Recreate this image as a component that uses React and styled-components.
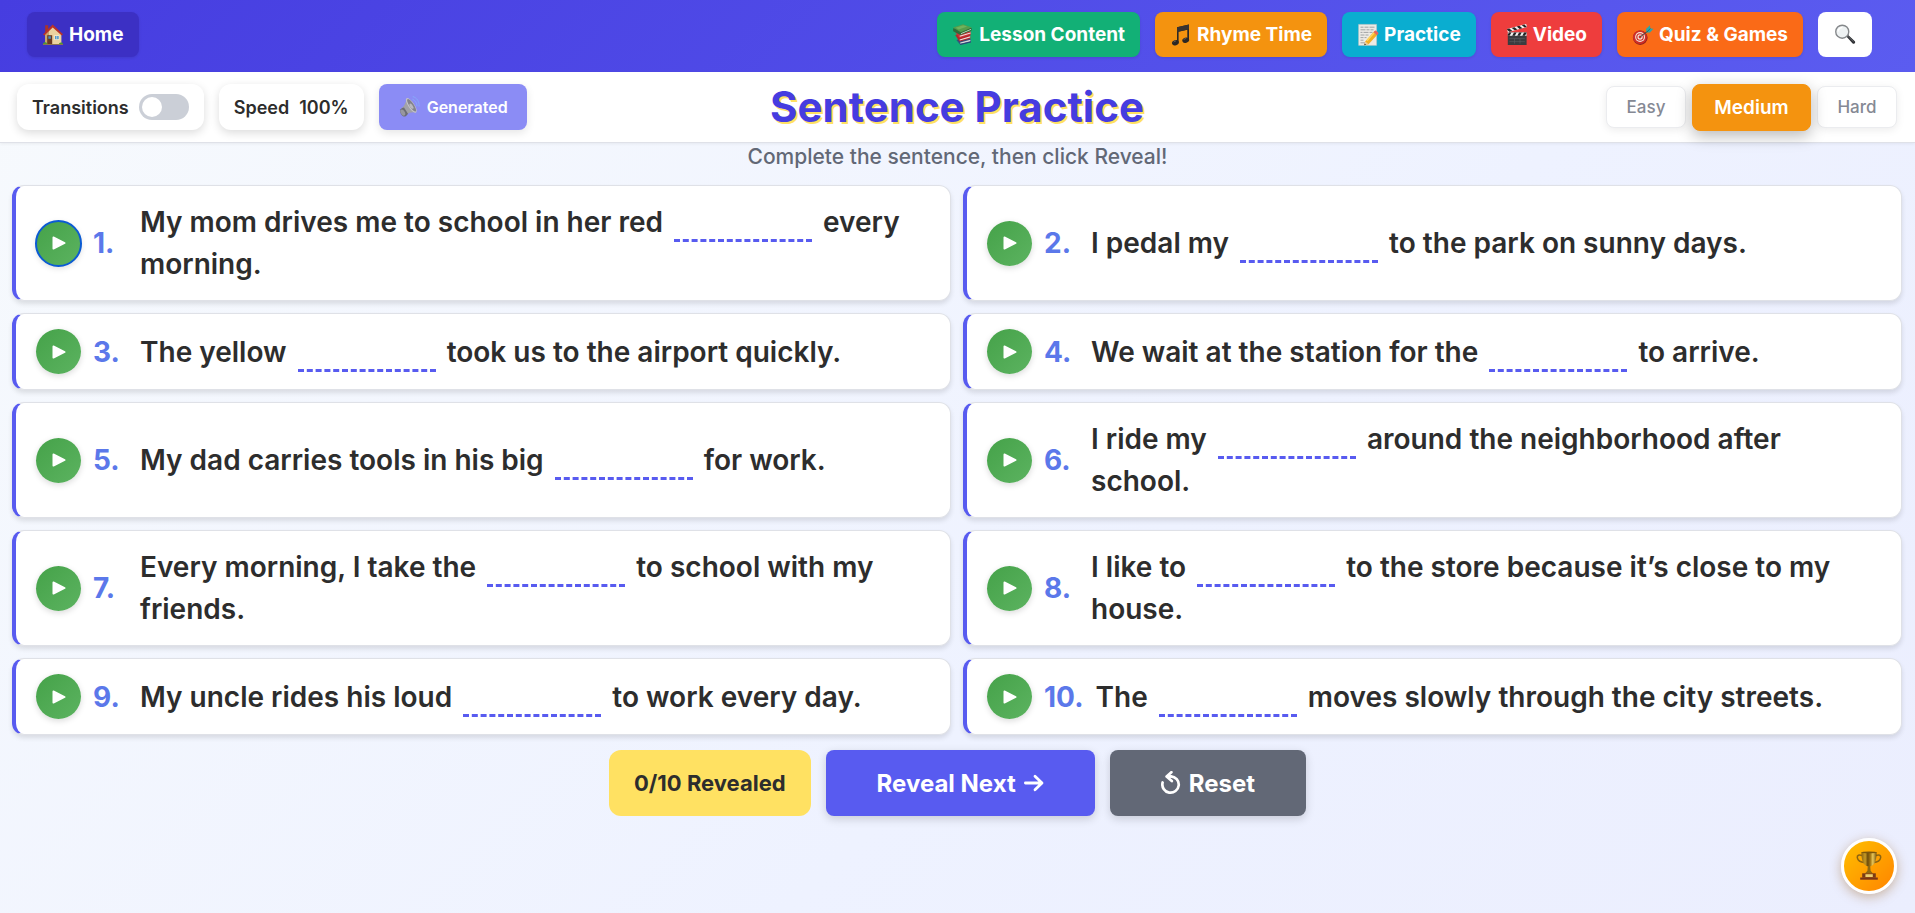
import React, { useState } from 'react';
import styled, { createGlobalStyle, css } from 'styled-components';

const BLANK = '___';

const sentences = [
  `My mom drives me to school in her red ${BLANK} every morning.`,
  `I pedal my ${BLANK} to the park on sunny days.`,
  `The yellow ${BLANK} took us to the airport quickly.`,
  `We wait at the station for the ${BLANK} to arrive.`,
  `My dad carries tools in his big ${BLANK} for work.`,
  `I ride my ${BLANK} around the neighborhood after school.`,
  `Every morning, I take the ${BLANK} to school with my friends.`,
  `I like to ${BLANK} to the store because it’s close to my house.`,
  `My uncle rides his loud ${BLANK} to work every day.`,
  `The ${BLANK} moves slowly through the city streets.`,
];

const levels = ['Easy', 'Medium', 'Hard'];

// Icons

const HouseIcon = () => (
  <Icon viewBox="0 0 22 24">
    <path d="M3.2 2.2h3v5l-3 3z" fill="#a8342a" />
    <path d="M3 10.5 10.8 3l8.6 7.8V21H3z" fill="#ecd3a0" />
    <path d="M3 10.5 7 6.6V21H3z" fill="#c9a56c" />
    <path d="M1 11.4 10.6 1.6 21 11.2l-1.3 1.2L10.7 4.4 2.4 12.6z" fill="#b93228" />
    <path d="M5.2 12.2h5V21h-5z" fill="#6b3a22" />
    <path d="M6.3 13.2h2.6v2.6H6.3z" fill="#4a88b8" />
    <path d="M12.2 12.2h5.2v4.8h-5.2z" fill="#f7ead0" />
    <path d="M13 13h3.7v3.2H13z" fill="#4c9bd0" />
    <path d="M14.7 13v3.2" stroke="#f7ead0" strokeWidth=".6" />
    <path d="M.8 21.7c.2-2.4 2-3 3.4-2.2.7.4 1 1.2 1 2.2zM16.8 21.7c.1-2 1.5-2.6 2.8-2.1 1 .3 1.4 1.2 1.5 2.1z" fill="#4f9a2e" />
    <path d="M1 21h20v1H1z" fill="#8e7250" />
  </Icon>
);

const BooksIcon = () => (
  <Icon viewBox="0 0 22 24">
    <path d="m4.4 17 3.8 4.8 10.6-2.6v-3l-6-2z" fill="#34507f" />
    <path d="m8.2 19.4 10.2-2.6v1.4L8.4 20.8z" fill="#dcdad6" />
    <path d="m8 21 10.8-2.5v.9L8.2 22z" fill="#294777" />
    <path d="m3.2 12 4.2 6.4 11-2.6v-3.4L12 10z" fill="#b5262c" />
    <path d="m7.6 16.4 10.6-3.2v1.2L7.8 17.4z" fill="#e9e5e0" />
    <path d="m2.6 8 4.6 7 11.6-3.2V8.4z" fill="#cb3036" />
    <path d="m7.6 12.8 11-3.4v1L7.8 13.8z" fill="#ece8e2" />
    <path d="m1 5.4.2 2.8 7.4 3.8 11-4.4V4.9L12 4z" fill="#2c6d3a" />
    <path d="m9 10.2 10-4.2v.8L9 11z" fill="#dfe6d6" />
    <path d="M1 4.6 11 1.2l8.8 3.2L8.8 9.2z" fill="#559d4c" />
    <path d="m3.6 4.8 7.6-2.6 4 1.4-8.4 2.8z" fill="#70b25d" />
  </Icon>
);

const MusicIcon = () => (
  <Icon viewBox="0 0 22 24">
    <path d="M7 4.2 19 1.6v15h-1.7V6.8L8.6 8.7v11H7z" fill="#2d2926" />
    <path d="M7 4.2 19 1.6v4.7L7 8.9z" fill="#393330" />
    <ellipse cx="5.4" cy="19.7" rx="3.5" ry="2.6" transform="rotate(-18 5.4 19.7)" fill="#2b2724" />
    <ellipse cx="15.7" cy="17.2" rx="3.5" ry="2.6" transform="rotate(-18 15.7 17.2)" fill="#2b2724" />
    <path d="M3.4 19.3c.6-.9 1.6-1.3 2.5-1.2M13.7 16.8c.6-.9 1.6-1.3 2.5-1.2" stroke="#827a74" strokeWidth=".7" fill="none" />
  </Icon>
);

const MemoIcon = () => (
  <Icon viewBox="0 0 22 24">
    <path d="M1.6 1.4h18v21h-18z" fill="#eceae5" />
    <path d="M1.6 1.4h18v21h-18z" fill="none" stroke="#c2c2be" strokeWidth=".5" />
    <path d="M3.5 4.2h3m1 0h4m1 0h5M3.5 6.8h5m1 0h3m1 0h3M3.5 9.4h2m1 0h5m1 0h3M3.5 12h4m1 0h3M3.5 14.6h3m1 0h2M3.5 17.2h3M3.5 19.8h7" stroke="#8e9294" strokeWidth=".8" />
    <path d="m8.2 18.5 8.7-9.7 3.4 3-8.7 9.5-4.2 1z" fill="#f3ae24" />
    <path d="m9.4 17.3 8.3-9.2 1 .9-8.2 9.2z" fill="#ffd65a" />
    <path d="m16.5 9.2 1-1.1c.6-.7 1.4-.7 2.1-.1l1.3 1.2c.7.6.7 1.3.2 1.9l-1.1 1.1z" fill="#e6665f" />
    <path d="m8.2 18.5-1 3.8 4.4-1z" fill="#edcf9c" />
    <path d="m7.7 20.5-.5 1.8 1.9-.5z" fill="#333" />
  </Icon>
);

const ClapperIcon = () => (
  <Icon viewBox="0 0 22 24">
    <path d="M1.8 9.4h18.8V22H1.8z" fill="#3b3c3f" />
    <path d="M1.8 9.4h18.8v3.4H1.8z" fill="#f2f2f0" />
    <path d="m3 9.4-1.2 2.2v1.2h1.8l1.8-3.4zm5 0-1.8 3.4h2.6l1.8-3.4zm5.1 0-1.8 3.4h2.6l1.8-3.4zm5 0-1.8 3.4h2.7l1.5-2.8v-.6z" fill="#222" />
    <path d="M1 6.1 20.2 1l.8 3.1L1.8 9.2z" fill="#f2f2f0" />
    <path d="m3.4 5.5 3 2.4-3.1.8-2-1.7-.3-.9zm5-1.3 3 2.3-2.7.8-3-2.4zm5-1.4 3 2.4-2.7.7-3-2.4zm5-1.3L21 4.1l-2.2.5-3-2.4z" fill="#242424" />
    <path d="M3.4 15.6h15.4M3.4 18.6h15.4M8.5 15.6v5M14 15.6v5" stroke="#5c5e62" strokeWidth=".6" />
  </Icon>
);

const TargetIcon = () => (
  <Icon viewBox="0 0 24 24">
    <ellipse cx="9" cy="15" rx="8" ry="7.8" fill="#8e1f1c" />
    <ellipse cx="8.6" cy="14.4" rx="7.6" ry="7.4" fill="#cf2f28" />
    <circle cx="8.8" cy="14.2" r="5.4" fill="#f4e7df" />
    <circle cx="8.8" cy="14.2" r="4.2" fill="#cf2f28" />
    <circle cx="8.8" cy="14.2" r="2.9" fill="#f4e7df" />
    <circle cx="8.8" cy="14.2" r="1.6" fill="#cf2f28" />
    <path d="m9 14 9-7" stroke="#524a45" strokeWidth="1.1" />
    <path d="m16 9.2-.8-3.8 4.4-4 .4 3.4 3.4.5-3.8 3.9z" fill="#2fa6a6" />
    <path d="m16 9.2 4-4.4" stroke="#156a74" strokeWidth=".9" />
  </Icon>
);

const SearchIcon = () => (
  <Icon viewBox="0 0 24 24">
    <path d="m13.5 13.7 2-1.8 7 6.6c.8.8.8 1.7.1 2.5s-1.7.8-2.5 0z" fill="#303236" />
    <path d="m14.9 13.1 6.4 6.1" stroke="#777a7d" strokeWidth=".7" />
    <circle cx="9" cy="8.4" r="7.1" fill="#eef2f3" stroke="#85888b" strokeWidth="1.5" />
    <path d="M4.5 8.3A4.6 4.6 0 0 1 9 3.8" fill="none" stroke="#fff" strokeWidth="1.6" />
  </Icon>
);

const SpeakerIcon = () => (
  <Icon viewBox="0 0 22 24">
    <path d="M3.4 13.2C6.6 11 8 7.5 8.4 3.4l9.8 14.2c-3.6-.6-6.6-.2-9.4 2z" fill="#a2a2a8" />
    <ellipse cx="13.3" cy="10.4" rx="3" ry="8.6" transform="rotate(-34 13.3 10.4)" fill="#c4c4c9" />
    <ellipse cx="13.6" cy="10.3" rx="2.2" ry="7.4" transform="rotate(-34 13.6 10.3)" fill="#83838b" />
    <ellipse cx="13.4" cy="11.2" rx="1.4" ry="3" transform="rotate(-34 13.4 11.2)" fill="#b9b9be" />
    <path d="M2.6 14.2c1-.9 2.4-1.6 3.4-1.7l4 6.2c-.6 1.1-1.6 2.2-2.8 2.8-3 .6-6.2-4-4.6-7.3z" fill="#6c6c74" />
    <ellipse cx="4.8" cy="17.6" rx="2" ry="3.4" transform="rotate(-30 4.8 17.6)" fill="#97979e" />
    <path d="M14.4 4.2c2.8 1 4.6 3.8 4.6 7M14.8 1.6c4 1 6.8 5 6.2 10" fill="none" stroke="#86abfa" strokeWidth=".9" />
  </Icon>
);

const TrophyIcon = () => (
  <Icon viewBox="0 0 26 30" $width={26} $height={30}>
    <defs>
      <linearGradient id="cup" x1="0" x2="1" y1="0" y2="0">
        <stop offset="0" stopColor="#8a6410" />
        <stop offset=".25" stopColor="#c79a24" />
        <stop offset=".42" stopColor="#6b4a0a" />
        <stop offset=".6" stopColor="#a87c18" />
        <stop offset=".75" stopColor="#e9c85a" />
        <stop offset="1" stopColor="#76520b" />
      </linearGradient>
    </defs>
    <path d="M6 4.5C3 3.2.9 4.4 1.3 6.7c.5 2.6 3.2 4.6 7.2 4.9M20 4.5c3-1.3 5.1-.1 4.7 2.2-.5 2.6-3.2 4.6-7.2 4.9" fill="none" stroke="#8c6410" strokeWidth="1.5" />
    <path d="M5.4 1h15.2c.1 7.2-1.6 13.2-5.8 14.2h-3.6C7 14.2 5.3 8.2 5.4 1z" fill="url(#cup)" />
    <ellipse cx="13" cy="1.4" rx="7.5" ry=".9" fill="#7b560c" />
    <path d="M11.8 15h2.4l.4 4.8 2.4 2.7H9l2.4-2.7z" fill="#8f6912" />
    <path d="M6.2 22.3h13.6v4.4H6.2z" fill="#7a3b16" />
    <path d="M9.4 23.2h7.4v2.8H9.4z" fill="#edcf6e" />
    <path d="M4.2 26.5h17.6v2.2H4.2z" fill="#7c3616" />
  </Icon>
);

const PlayIcon = () => (
  <Icon viewBox="0 0 14 14" $width={14} $height={14}>
    <path d="M1.4 1.4 12.6 7 1.4 12.6z" fill="#fff" stroke="#fff" strokeWidth="1.8" strokeLinejoin="round" />
  </Icon>
);

const ArrowIcon = () => (
  <Icon viewBox="0 0 20 20" $width={20} $height={20}>
    <path d="M1.4 10h16.4M11 3.2l7 6.8-7 6.8" fill="none" stroke="#fff" strokeWidth="2.8" strokeLinecap="round" strokeLinejoin="round" />
  </Icon>
);

const ResetIcon = () => (
  <Icon viewBox="0 0 20 24" $width={20} $height={24}>
    <path d="M1.6 11.5a8.2 8.2 0 1 0 8.2-6.2" fill="none" stroke="#fff" strokeWidth="2.7" strokeLinecap="round" />
    <path d="M10.4 1.2 5.6 5.5l5.2 4.6M5.8 5.5h4.4" fill="none" stroke="#fff" strokeWidth="2.7" strokeLinecap="round" strokeLinejoin="round" />
  </Icon>
);

const links = [
  { label: 'Lesson Content', color: '#12b076', icon: <BooksIcon /> },
  { label: 'Rhyme Time', color: '#f4930f', icon: <MusicIcon /> },
  { label: 'Practice', color: '#0aadd0', icon: <MemoIcon /> },
  { label: 'Video', color: '#ee3d3d', icon: <ClapperIcon /> },
  { label: 'Quiz & Games', color: '#fa6a17', icon: <TargetIcon /> },
];

const Sentence = ({ number, text, active, onPlay }) => {
  const [before, after] = text.split(BLANK);

  return (
    <Card>
      <PlayButton type="button" aria-label={`Play ${number}`} $active={active} onClick={onPlay}>
        <PlayIcon />
      </PlayButton>
      <Number>{number}.</Number>
      <SentenceText>
        {before}
        <Blank />
        {after}
      </SentenceText>
    </Card>
  );
};

const App = () => {
  const [transitions, setTransitions] = useState(false);
  const [level, setLevel] = useState('Medium');
  const [revealed, setRevealed] = useState(0);
  const [playing, setPlaying] = useState(0);

  return (
    <Page>
      <GlobalStyle />

      <Header>
        <NavLink href="#home" $color="#3c30c4">
          <HouseIcon />
          Home
        </NavLink>
        <Nav>
          {links.map((link) => (
            <NavLink key={link.label} href="#lesson" $color={link.color}>
              {link.icon}
              {link.label}
            </NavLink>
          ))}
          <SearchButton type="button" aria-label="Search">
            <SearchIcon />
          </SearchButton>
        </Nav>
      </Header>

      <Toolbar>
        <ToolGroup>
          <Pill as="label">
            Transitions
            <Switch
              type="checkbox"
              checked={transitions}
              onChange={(e) => setTransitions(e.target.checked)}
            />
          </Pill>
          <Pill>
            <span>Speed</span>
            <span>100%</span>
          </Pill>
          <VoiceButton type="button">
            <SpeakerIcon />
            Generated
          </VoiceButton>
        </ToolGroup>
        <Title>Sentence Practice</Title>
        <Levels>
          {levels.map((name) => (
            <LevelButton
              key={name}
              type="button"
              $active={name === level}
              onClick={() => setLevel(name)}
            >
              {name}
            </LevelButton>
          ))}
        </Levels>
      </Toolbar>

      <Subtitle>Complete the sentence, then click Reveal!</Subtitle>

      <Grid>
        {sentences.map((text, i) => (
          <Sentence
            key={text}
            number={i + 1}
            text={text}
            active={i === playing}
            onPlay={() => setPlaying(i)}
          />
        ))}
      </Grid>

      <Actions>
        <Score>{`${revealed}/${sentences.length} Revealed`}</Score>
        <ActionButton
          type="button"
          $color="#585bf0"
          onClick={() => setRevealed(Math.min(revealed + 1, sentences.length))}
        >
          Reveal Next
          <ArrowIcon />
        </ActionButton>
        <ActionButton type="button" $color="#626876" onClick={() => setRevealed(0)}>
          <ResetIcon />
          Reset
        </ActionButton>
      </Actions>

      <TrophyButton type="button" aria-label="Trophies">
        <TrophyIcon />
      </TrophyButton>
    </Page>
  );
};

export default App;

// Styles

const GlobalStyle = createGlobalStyle`
  * {
    box-sizing: border-box;
  }

  body {
    margin: 0;
    color: #2d2d2d;
    font-family: Inter, "Liberation Sans", sans-serif;
  }

  button {
    border: none;
    font-family: inherit;
    cursor: pointer;
  }
`;

const Icon = styled.svg`
  flex: none;
  display: block;
  width: ${(props) => props.$width || 22}px;
  height: ${(props) => props.$height || 24}px;
`;

const Page = styled.div`
  min-height: 100vh;
  background: linear-gradient(135deg, #f7fafd 0%, #eef2ff 60%, #ebeefe 100%);
`;

const Header = styled.header`
  display: flex;
  align-items: center;
  justify-content: space-between;
  height: 72px;
  padding: 0 43px 3px 27px;
  background: linear-gradient(135deg, #463de0, #5b5cf0);
`;

const Nav = styled.nav`
  display: flex;
  gap: 15px;
`;

const NavLink = styled.a`
  display: flex;
  align-items: center;
  gap: 5px;
  height: 45px;
  padding: 0 15px;
  border-radius: 8px;
  background: ${(props) => props.$color};
  box-shadow: 0 1px 3px rgba(0, 0, 0, 0.1);
  color: #fff;
  font-size: 19px;
  font-weight: 700;
  text-decoration: none;
  white-space: nowrap;
`;

const SearchButton = styled.button`
  display: flex;
  align-items: center;
  justify-content: center;
  width: 54px;
  height: 45px;
  padding: 0;
  border-radius: 8px;
  background: #fff;
`;

const Toolbar = styled.div`
  display: grid;
  grid-template-columns: 1fr auto 1fr;
  align-items: center;
  height: 71px;
  padding: 0 18px 0 17px;
  border-bottom: 1px solid #dfe1e8;
  background: #fff;
  box-shadow: 0 1px 3px rgba(0, 0, 0, 0.06);
`;

const ToolGroup = styled.div`
  display: flex;
  gap: 15px;
`;

const Pill = styled.div`
  display: flex;
  align-items: center;
  gap: 10px;
  height: 46px;
  padding: 0 15px;
  border-radius: 12px;
  background: #fff;
  box-shadow: 0 3px 10px rgba(0, 0, 0, 0.14);
  font-size: 18px;
  font-weight: 600;
  white-space: nowrap;
`;

const Switch = styled.input`
  appearance: none;
  display: flex;
  width: 50px;
  height: 26px;
  margin: 0;
  padding: 3px;
  border-radius: 13px;
  background: ${(props) => (props.checked ? '#585bf0' : '#cbcfd7')};
  cursor: pointer;

  &::before {
    content: "";
    width: 20px;
    height: 20px;
    margin-left: ${(props) => (props.checked ? '24px' : '0')};
    border-radius: 50%;
    background: #fff;
  }
`;

const VoiceButton = styled.button`
  display: flex;
  align-items: center;
  gap: 7px;
  height: 46px;
  padding: 0 19px;
  border-radius: 8px;
  background: #8b8cf5;
  box-shadow: 0 3px 8px rgba(0, 0, 0, 0.1);
  color: #fff;
  font-size: 16px;
  font-weight: 600;
`;

const Title = styled.h1`
  margin: 0;
  color: #463ce0;
  font-size: 42px;
  font-weight: 700;
  line-height: 52px;
  text-shadow: 2px 2px 0 #ffe162;
  white-space: nowrap;
`;

const Levels = styled.div`
  display: flex;
  align-items: center;
  justify-content: flex-end;
  gap: 6px;
`;

const LevelButton = styled.button`
  width: 80px;
  height: 42px;
  padding: 0;
  border: 1px solid #ebecef;
  border-radius: 8px;
  background: #fff;
  box-shadow: 0 2px 8px rgba(0, 0, 0, 0.08);
  color: #858994;
  font-size: 17px;
  font-weight: 500;

  ${(props) => props.$active && css`
    position: relative;
    width: 119px;
    height: 47px;
    border-color: #f4930f;
    background: #f4930f;
    box-shadow: 0 5px 16px rgba(0, 0, 0, 0.28);
    color: #fff;
    font-size: 19px;
    font-weight: 600;
  `}
`;

const Subtitle = styled.p`
  margin: 0;
  padding-bottom: 14px;
  color: #626876;
  font-size: 21px;
  font-weight: 500;
  line-height: 28px;
  text-align: center;
`;

const Grid = styled.main`
  display: grid;
  grid-template-columns: 1fr 1fr;
  gap: 12px;
  padding: 0 13px 0 12px;
`;

const Card = styled.section`
  display: flex;
  align-items: center;
  gap: 12px;
  padding: 15px 20px;
  border: 1px solid #dfe1e7;
  border-left: 4px solid #585bf0;
  border-radius: 12px;
  background: #fff;
  box-shadow: 0 3px 5px rgba(0, 0, 0, 0.11);
`;

const PlayButton = styled.button`
  flex: none;
  display: flex;
  align-items: center;
  justify-content: center;
  width: 45px;
  height: 45px;
  padding: 0;
  border-radius: 50%;
  background: linear-gradient(135deg, #45a249, #5cb360);
  box-shadow: 0 2px 6px rgba(0, 0, 0, 0.15);
  outline: ${(props) => (props.$active ? '2px solid #0b5bd3' : 'none')};
  outline-offset: -1px;
`;

const Number = styled.span`
  flex: none;
  min-width: 35px;
  color: #5b78ea;
  font-size: 28px;
  font-weight: 700;
`;

const SentenceText = styled.p`
  flex: 1;
  margin: 0;
  font-size: 28px;
  font-weight: 600;
  line-height: 42px;
`;

const Blank = styled.span`
  display: inline-block;
  width: 138px;
  height: 20px;
  margin: 0 4px;
  border-bottom: 3px dashed #585bf0;
  vertical-align: -10px;
`;

const Actions = styled.footer`
  display: flex;
  justify-content: center;
  gap: 15px;
  padding: 15px;
`;

const Score = styled.div`
  display: flex;
  align-items: center;
  height: 66px;
  padding: 0 25px;
  border-radius: 12px;
  background: #ffe162;
  font-size: 22px;
  font-weight: 700;
`;

const ActionButton = styled.button`
  display: flex;
  align-items: center;
  gap: 8px;
  height: 66px;
  padding: 0 51px;
  border-radius: 8px;
  background: ${(props) => props.$color};
  box-shadow: 0 3px 10px rgba(0, 0, 0, 0.16);
  color: #fff;
  font-size: 24px;
  font-weight: 700;
`;

const TrophyButton = styled.button`
  position: fixed;
  right: 18px;
  bottom: 19px;
  display: flex;
  align-items: center;
  justify-content: center;
  width: 56px;
  height: 56px;
  padding: 0;
  border: 3px solid #fff;
  border-radius: 50%;
  background: linear-gradient(135deg, #ffbf00, #ff8400);
  box-shadow: 0 3px 12px rgba(150, 90, 20, 0.4);
`;
